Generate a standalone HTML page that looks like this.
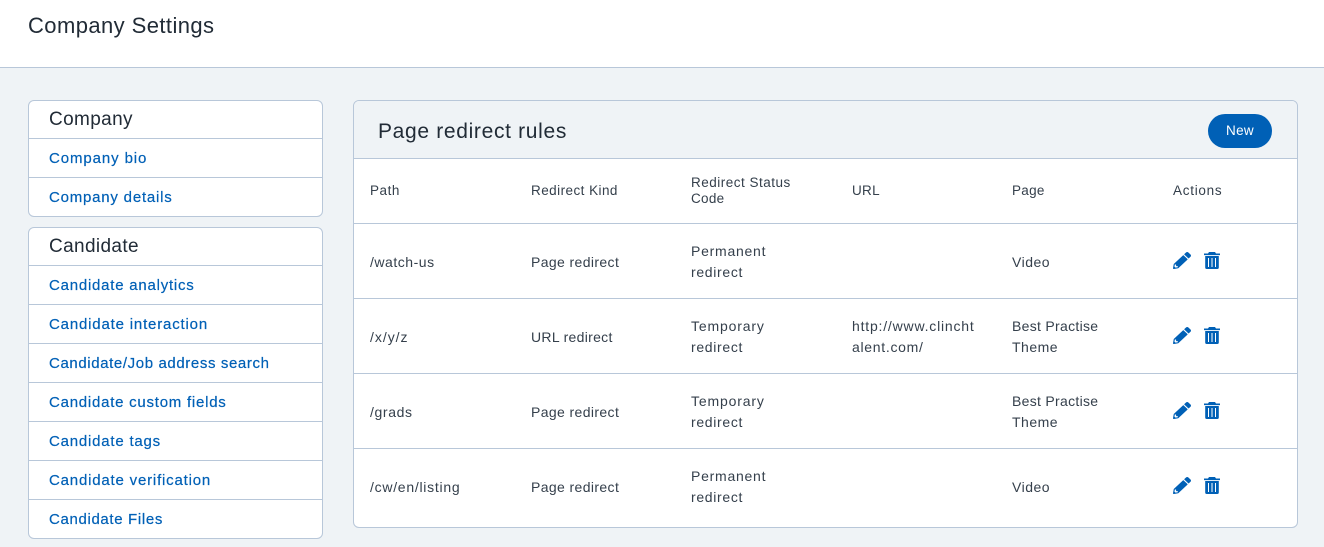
<!DOCTYPE html>
<html lang="en"><head><meta charset="utf-8"><title>Company Settings</title>
<style>
html,body{margin:0;padding:0}
body{width:1324px;height:547px;position:relative;overflow:hidden;background:#eff3f6;font-family:"Liberation Sans",sans-serif;color:#212b36}
.b{position:absolute;box-sizing:border-box;background:#fff;border:1px solid #b8c7d9}
.l{position:absolute;height:1px;background:#b8c7d9}
.t{position:absolute;white-space:nowrap;line-height:20px;height:20px}
.h{font-size:19px;letter-spacing:.37px;color:#212b36}
.a{font-size:15px;letter-spacing:.72px;color:#0060b6;-webkit-text-stroke:.2px #0060b6}
.c{font-size:14px;letter-spacing:.3px;color:#343f4b}
.s{font-size:13.5px;letter-spacing:.4px;color:#343f4b}
.e{position:absolute;fill:#0060b6}
</style></head><body>
<div class="b" style="left:-1px;top:-1px;width:1326px;height:69px;border-width:0 0 1px"></div>
<div class="t" style="left:28px;top:16px;font-size:22px;letter-spacing:.42px">Company Settings</div>

<div class="b" style="left:28px;top:100px;width:295px;height:117px;border-radius:6px"></div>
<div class="l" style="left:29px;top:138px;width:293px"></div>
<div class="l" style="left:29px;top:177px;width:293px"></div>
<div class="t h" style="left:49px;top:110px">Company</div>
<div class="t a" style="left:49px;top:149px;letter-spacing:.9px">Company bio</div>
<div class="t a" style="left:49px;top:188px;letter-spacing:.79px">Company details</div>

<div class="b" style="left:28px;top:227px;width:295px;height:312px;border-radius:6px"></div>
<div class="l" style="left:29px;top:265px;width:293px"></div>
<div class="l" style="left:29px;top:304px;width:293px"></div>
<div class="l" style="left:29px;top:343px;width:293px"></div>
<div class="l" style="left:29px;top:382px;width:293px"></div>
<div class="l" style="left:29px;top:421px;width:293px"></div>
<div class="l" style="left:29px;top:460px;width:293px"></div>
<div class="l" style="left:29px;top:499px;width:293px"></div>
<div class="t h" style="left:49px;top:237px">Candidate</div>
<div class="t a" style="left:49px;top:276px;letter-spacing:.77px">Candidate analytics</div>
<div class="t a" style="left:49px;top:315px;letter-spacing:.82px">Candidate interaction</div>
<div class="t a" style="left:49px;top:354px;letter-spacing:.61px">Candidate/Job address search</div>
<div class="t a" style="left:49px;top:393px;letter-spacing:.76px">Candidate custom fields</div>
<div class="t a" style="left:49px;top:432px;letter-spacing:.79px">Candidate tags</div>
<div class="t a" style="left:49px;top:471px;letter-spacing:.81px">Candidate verification</div>
<div class="t a" style="left:49px;top:510px;letter-spacing:.65px">Candidate Files</div>

<div class="b" style="left:353px;top:100px;width:945px;height:428px;border-radius:6px"></div>
<div style="position:absolute;left:354px;top:101px;width:943px;height:57px;background:#eff3f6;border-radius:5px 5px 0 0"></div>
<div class="l" style="left:354px;top:158px;width:943px"></div>
<div class="t" style="left:378px;top:122px;font-size:21px;letter-spacing:.67px">Page redirect rules</div>
<div style="position:absolute;left:1208px;top:114px;width:64px;height:34px;border-radius:17px;background:#0060b6;color:#fff;font-size:13.5px;letter-spacing:.3px;line-height:33px;text-align:center">New</div>

<div class="l" style="left:354px;top:223px;width:943px"></div>
<div class="l" style="left:354px;top:298px;width:943px"></div>
<div class="l" style="left:354px;top:373px;width:943px"></div>
<div class="l" style="left:354px;top:448px;width:943px"></div>

<div class="t s" style="left:370px;top:181px;letter-spacing:.55px">Path</div>
<div class="t s" style="left:531px;top:181px;letter-spacing:.45px">Redirect Kind</div>
<div class="t s" style="left:691px;top:173px;letter-spacing:.5px">Redirect Status</div>
<div class="t s" style="left:691px;top:189px;letter-spacing:.3px">Code</div>
<div class="t s" style="left:852px;top:181px;letter-spacing:.3px">URL</div>
<div class="t s" style="left:1012px;top:181px;letter-spacing:.3px">Page</div>
<div class="t s" style="left:1173px;top:181px;letter-spacing:.73px">Actions</div>

<div class="t c" style="left:370px;top:252px;letter-spacing:.52px">/watch-us</div>
<div class="t c" style="left:531px;top:252px;letter-spacing:.38px">Page redirect</div>
<div class="t c" style="left:691px;top:241px;letter-spacing:.75px">Permanent</div>
<div class="t c" style="left:691px;top:262px;letter-spacing:.67px">redirect</div>
<div class="t c" style="left:1012px;top:252px;letter-spacing:.5px">Video</div>

<div class="t c" style="left:370px;top:327px;letter-spacing:.97px">/x/y/z</div>
<div class="t c" style="left:531px;top:327px">URL redirect</div>
<div class="t c" style="left:691px;top:316px;letter-spacing:.85px">Temporary</div>
<div class="t c" style="left:691px;top:337px;letter-spacing:.67px">redirect</div>
<div class="t c" style="left:852px;top:316px;letter-spacing:.8px">http://www.clincht</div>
<div class="t c" style="left:852px;top:337px;letter-spacing:.7px">alent.com/</div>
<div class="t c" style="left:1012px;top:316px">Best Practise</div>
<div class="t c" style="left:1012px;top:337px;letter-spacing:.5px">Theme</div>

<div class="t c" style="left:370px;top:402px;letter-spacing:.63px">/grads</div>
<div class="t c" style="left:531px;top:402px;letter-spacing:.38px">Page redirect</div>
<div class="t c" style="left:691px;top:391px;letter-spacing:.85px">Temporary</div>
<div class="t c" style="left:691px;top:412px;letter-spacing:.67px">redirect</div>
<div class="t c" style="left:1012px;top:391px">Best Practise</div>
<div class="t c" style="left:1012px;top:412px;letter-spacing:.5px">Theme</div>

<div class="t c" style="left:370px;top:477px;letter-spacing:.73px">/cw/en/listing</div>
<div class="t c" style="left:531px;top:477px;letter-spacing:.38px">Page redirect</div>
<div class="t c" style="left:691px;top:466px;letter-spacing:.75px">Permanent</div>
<div class="t c" style="left:691px;top:487px;letter-spacing:.67px">redirect</div>
<div class="t c" style="left:1012px;top:477px;letter-spacing:.5px">Video</div>

<svg width="0" height="0" style="position:absolute"><defs>
<symbol id="p" viewBox="0 0 512 512" preserveAspectRatio="none"><path d="M497.9 142.1l-46.1 46.1c-4.7 4.7-12.3 4.7-17 0l-111-111c-4.7-4.7-4.7-12.3 0-17l46.1-46.1c18.7-18.7 49.1-18.7 67.9 0l60.1 60.1c18.8 18.7 18.8 49.1 0 67.9zM284.2 99.8L21.6 362.4.4 483.9c-2.9 16.4 11.4 30.6 27.8 27.8l121.5-21.3 262.6-262.6c4.7-4.7 4.7-12.3 0-17l-111-111c-4.8-4.7-12.4-4.7-17.1 0zM88 424h48v36.3l-64.5 11.3-31.1-31.1L51.7 376H88v48z"/></symbol>
<symbol id="r" viewBox="0 0 16 17"><path fill-rule="evenodd" d="M5 0h6l1 1.5h4v1.6H0V1.5h4zM1.2 4h13.6v11.5a1.5 1.5 0 0 1-1.5 1.5H2.7a1.5 1.5 0 0 1-1.5-1.5zM4 6v9h1V6zM7.5 6v9h1V6zM11 6v9h1V6z"/></symbol>
</defs></svg>
<svg class="e" style="left:1173px;top:252px" width="18" height="17"><use href="#p"/></svg>
<svg class="e" style="left:1204px;top:252px" width="16" height="17"><use href="#r"/></svg>
<svg class="e" style="left:1173px;top:327px" width="18" height="17"><use href="#p"/></svg>
<svg class="e" style="left:1204px;top:327px" width="16" height="17"><use href="#r"/></svg>
<svg class="e" style="left:1173px;top:402px" width="18" height="17"><use href="#p"/></svg>
<svg class="e" style="left:1204px;top:402px" width="16" height="17"><use href="#r"/></svg>
<svg class="e" style="left:1173px;top:477px" width="18" height="17"><use href="#p"/></svg>
<svg class="e" style="left:1204px;top:477px" width="16" height="17"><use href="#r"/></svg>
</body></html>
